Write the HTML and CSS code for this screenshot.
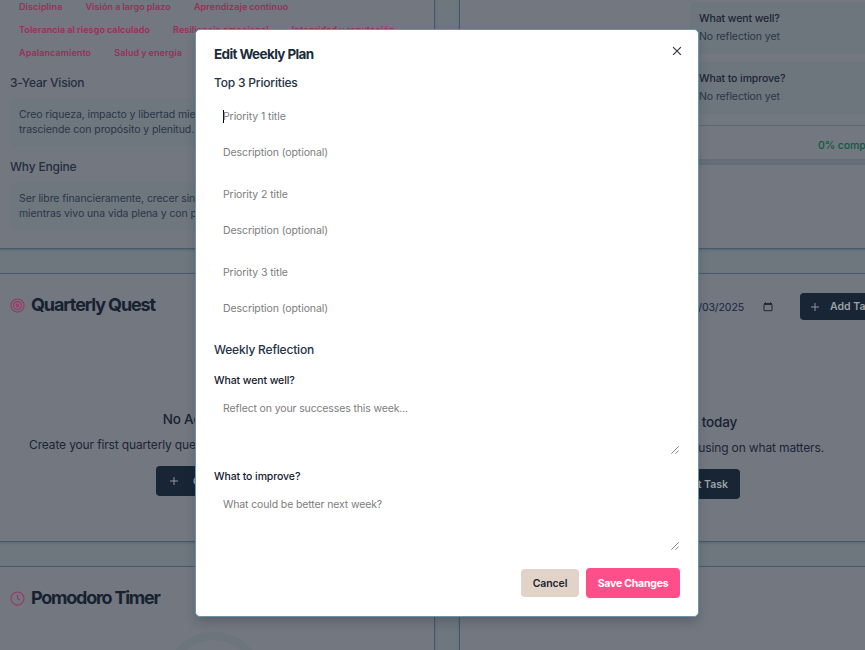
FILE: index.html
```html
<!DOCTYPE html>
<html lang="en">
<head>
<meta charset="utf-8">
<title>Weekly Plan</title>
<link rel="stylesheet" href="styles.css">
</head>
<body>
<main class="board">
  <section class="card vision">
    <div class="tags"><span>Disciplina</span><span>Visión a largo plazo</span><span>Aprendizaje continuo</span></div>
    <div class="tags"><span>Tolerancia al riesgo calculado</span><span>Resiliencia emocional</span><span>Integridad y reputación</span></div>
    <div class="tags"><span>Apalancamiento</span><span>Salud y energía</span></div>
    <h3>3-Year Vision</h3>
    <p class="quote">Creo riqueza, impacto y libertad mientras<br>trasciende con propósito y plenitud.</p>
    <h3>Why Engine</h3>
    <p class="quote">Ser libre financieramente, crecer sin límites<br>mientras vivo una vida plena y con propósito.</p>
  </section>
  <section class="card review">
    <div class="note note-first"><b>What went well?</b><span>No reflection yet</span></div>
    <div class="note"><b>What to improve?</b><span>No reflection yet</span></div>
    <div class="progress">0% completed</div>
    <div class="track"></div>
  </section>
  <section class="card quest">
    <h2><svg class="icon" viewBox="0 0 24 24"><circle cx="12" cy="12" r="10.5"/><circle cx="12" cy="12" r="6.3"/><circle cx="12" cy="12" r="2.2"/></svg>Quarterly Quest</h2>
    <div class="empty">
      <h4>No Active Quests</h4>
      <p>Create your first quarterly quest to start making progress now.</p>
      <div class="btn quest-btn"><svg class="plus" viewBox="0 0 24 24"><path d="M4 12h16M12 4v16"/></svg>Create Quest</div>
    </div>
  </section>
  <section class="card tasks">
    <div class="toolbar">
      <span class="date">20/03/2025</span>
      <svg class="cal" viewBox="0 0 10 10"><path d="M1 2.5h8v6.2H1z"/><path class="band" d="M1 2h8"/><path d="M2.5.2v1.5M7.5.2v1.5"/></svg>
      <div class="btn add-btn"><svg class="plus" viewBox="0 0 24 24"><path d="M4 12h16M12 4v16"/></svg>Add Task</div>
    </div>
    <div class="empty">
      <h4>No tasks yet for today</h4>
      <p>Add your first task to start focusing on what matters.</p>
      <div class="btn first-btn">Add First Task</div>
    </div>
  </section>
  <section class="card timer">
    <h2><svg class="icon" viewBox="0 0 24 24"><circle cx="12" cy="12" r="10.5"/><path d="M12 6v6.3l4 2"/></svg>Pomodoro Timer</h2>
    <div class="dial"></div>
  </section>
  <section class="card"></section>
</main>

<div class="modal">
  <svg class="close" viewBox="0 0 9 9"><path d="M1 1l7 7M8 1L1 8"/></svg>
  <h1>Edit Weekly Plan</h1>
  <h3 class="priorities">Top 3 Priorities</h3>
  <div class="pair"><div class="field focused">Priority 1 title</div><div class="field">Description (optional)</div></div>
  <div class="pair"><div class="field">Priority 2 title</div><div class="field">Description (optional)</div></div>
  <div class="pair"><div class="field">Priority 3 title</div><div class="field">Description (optional)</div></div>
  <h3 class="reflection">Weekly Reflection</h3>
  <div class="label">What went well?</div>
  <div class="area">Reflect on your successes this week...<svg class="grip" viewBox="0 0 8 8"><path d="M.3 7.7L7.7.3M4.5 7.7l3.2-3.2"/></svg></div>
  <div class="label">What to improve?</div>
  <div class="area">What could be better next week?<svg class="grip" viewBox="0 0 8 8"><path d="M.3 7.7L7.7.3M4.5 7.7l3.2-3.2"/></svg></div>
  <div class="actions"><div class="cancel">Cancel</div><div class="save">Save Changes</div></div>
</div>
</body>
</html>
```

FILE: styles.css
```css
* { box-sizing: border-box; margin: 0; padding: 0; }
html { overflow: hidden; }
body {
  width: 865px; height: 650px; overflow: hidden; position: relative;
  background: #6e777e; color: #1c2536;
  font-family: Inter, "Liberation Sans", sans-serif; font-size: 10.5px; letter-spacing: -.09px;
}
svg { fill: none; stroke: currentColor; display: block; flex: none; }
.board {
  display: grid; grid-template-columns: 436px 500px;
  grid-template-rows: 250px 269px 140px; column-gap: 24px; row-gap: 24px;
  margin-left: -1px; margin-top: -1px; width: 866px; height: 651px; overflow: hidden;
}
.card {
  background: #737780; border: 1px solid #425b6c; overflow: hidden;
  box-shadow: 0 1px 2px rgba(30, 45, 60, .25);
}
.vision { padding-left: 10px; }
.tags { display: flex; gap: 5px; height: 23px; line-height: 13px; font-size: 9px; font-weight: 600; letter-spacing: .1px; word-spacing: -.4px; color: #9a2f58; }
.tags span { padding: 0 9px; white-space: nowrap; }
h3 { font-size: 12px; line-height: 18px; font-weight: 500; letter-spacing: -.19px; }
.vision h3 { margin-top: 5px; color: #252e40; }
.quote { margin: 6px 10px 0 0; padding: 9px; height: 49px; border-radius: 6px; background: #6e777e; line-height: 15px; color: #2b3548; white-space: nowrap; }
.vision .quote + h3 { margin-top: 11px; }
.review { padding-left: 230px; }
.note { height: 52px; margin-bottom: 8px; padding: 8px 9px; border-radius: 6px; background: #6d767d; display: flex; flex-direction: column; }
.note b { font-weight: 500; line-height: 18px; height: 18px; }
.note span { line-height: 17px; color: #2b3548; }
.note-first { margin-top: 2px; }
.progress { margin: 11px 0 0 -230px; padding: 12px 0 0 358px; height: 34px; border-top: 1px solid #5d6876; line-height: 16px; color: #0a5c43; font-weight: 500; white-space: nowrap; }
.track { height: 6px; margin-left: -230px; background: #646e78; }
.quest, .timer { padding-left: 10px; }
h2 { display: flex; align-items: center; gap: 6px; font-size: 18px; line-height: 24px; font-weight: 650; letter-spacing: -1.12px; color: #172231; }
.quest h2, .timer h2 { margin-top: 19px; }
.timer h2 { letter-spacing: -1.24px; }
.icon { width: 15px; height: 15px; color: #9b3561; stroke-width: 1.8; }
.empty { display: flex; flex-direction: column; align-items: center; white-space: nowrap; }
.empty h4 { font-size: 13.5px; font-weight: 500; line-height: 20px; letter-spacing: -.2px; color: #172231; }
.empty p { font-size: 12px; line-height: 18px; margin-top: 7px; letter-spacing: -.14px; }
.quest .empty { width: 414px; margin-top: 92px; }
.quest .empty p { align-self: flex-start; margin-left: 19px; }
.btn { display: flex; align-items: center; height: 30px; border-radius: 4px; background: #182534; color: #9da1a7; font-weight: 600; letter-spacing: 0; white-space: nowrap; }
.quest-btn { width: 122px; margin-top: 12px; padding-left: 12px; gap: 13px; }
.plus { width: 12px; height: 12px; stroke-width: 1.8; }
.toolbar { display: flex; align-items: center; margin: 19px 0 0 224px; height: 27px; }
.date { width: 60px; white-space: nowrap; display: flex; justify-content: flex-end; padding-top: 1px; color: #152640; }
.cal { width: 10px; height: 10px; margin: 0 27px 0 19px; color: #252a30; }
.band { stroke-width: 2; }
.add-btn { width: 94px; height: 27px; padding-left: 9px; gap: 9px; }
.tasks .empty { width: 364px; margin-top: 92px; align-items: flex-end; }
.tasks h4 { margin-right: 87px; }
.first-btn { width: 116px; margin: 12px 84px 0 0; padding-right: 12px; justify-content: flex-end; }
.dial { width: 98px; height: 98px; margin: 22px 0 0 155px; border: 8px solid #6c747c; border-radius: 50%; }
.modal {
  position: absolute; left: 195px; top: 29px; width: 504px; height: 588px;
  padding: 16px 18px; background: #fff; border: 1px solid #6996a8; border-radius: 5px;
  box-shadow: 0 6px 12px -2px rgba(20, 30, 40, .28);
}
.close { position: absolute; left: 476px; top: 16px; width: 10px; height: 10px; stroke-width: 1.1; color: #303744; }
h1 { font-size: 13.5px; line-height: 16px; font-weight: 650; letter-spacing: -.62px; color: #1b2d3c; }
.modal h3 { color: #263246; }
.priorities { margin-top: 12px; }
.pair { margin-bottom: 12px; }
.field { height: 30px; padding: 0 9px; line-height: 30px; color: #7d7d7d; }
.field + .field { margin-top: 6px; }
.priorities + .pair { margin-top: 10px; }
.focused { background: linear-gradient(#000, #000) 9px 8px / 1px 13px no-repeat; }
.reflection { margin-top: 17px; }
.label { line-height: 16px; margin-top: 14px; font-weight: 550; color: #17202e; }
.area { position: relative; height: 60px; margin-top: 6px; padding: 6px 9px; line-height: 15px; letter-spacing: -.13px; color: #7d7d7d; }
.area + .label { margin-top: 14px; }
.grip { position: absolute; right: 1px; bottom: 1px; width: 8px; height: 8px; stroke-width: .8; color: #666; }
.actions { display: flex; justify-content: flex-end; align-items: center; gap: 7px; margin-top: 17px; height: 30px; font-weight: 600; }
.cancel, .save { display: flex; align-items: center; justify-content: center; border-radius: 4px; }
.cancel { width: 58px; height: 28px; background: #e1d3c8; color: #1c2530; }
.save { width: 94px; height: 30px; background: #ff4f8b; color: #fff; font-weight: 650; letter-spacing: -.22px; }
```
